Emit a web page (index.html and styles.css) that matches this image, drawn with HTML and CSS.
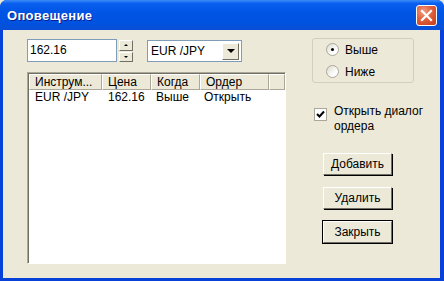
FILE: index.html
```html
<!DOCTYPE html>
<html lang="ru">
<head>
  <meta charset="UTF-8">
  <title>Оповещение</title>
  <link rel="stylesheet" href="styles.css">
</head>
<body>
  <div class="window">
    <div class="titlebar">
      <span class="title">Оповещение</span>
      <span class="close-btn">
        <svg width="13" height="13" viewBox="0 0 13 13"><path d="M2 2 L11 11 M11 2 L2 11" stroke="#fff" stroke-width="2.2" stroke-linecap="square"/></svg>
      </span>
    </div>
    <div class="client">
      <div class="left-col">
        <div class="input-row">
          <div class="edit">162.16</div>
          <div class="spin">
            <span class="spin-btn"><i class="arr-up"></i></span>
            <span class="spin-btn"><i class="arr-down"></i></span>
          </div>
          <div class="combo">
            <span class="combo-text">EUR /JPY</span>
            <span class="combo-btn"><i class="arr-down big"></i></span>
          </div>
        </div>
        <div class="listview">
          <div class="lv-header">
            <span class="hd c1">Инструм...</span>
            <span class="hd c2">Цена</span>
            <span class="hd c3">Когда</span>
            <span class="hd c4">Ордер</span>
            <span class="hd c5"></span>
          </div>
          <div class="lv-row">
            <span class="cell c1">EUR /JPY</span>
            <span class="cell c2">162.16</span>
            <span class="cell c3">Выше</span>
            <span class="cell c4">Открыть</span>
          </div>
        </div>
      </div>
      <div class="right-col">
        <div class="groupbox">
          <label class="radio-line"><span class="radio checked"></span>Выше</label>
          <label class="radio-line"><span class="radio"></span>Ниже</label>
        </div>
        <div class="check-line">
          <span class="checkbox">
            <svg width="9" height="9" viewBox="0 0 9 9"><path d="M1 4 L3.5 6.5 L8 1.5" stroke="#000" stroke-width="2" fill="none"/></svg>
          </span>
          <span class="check-text">Открыть диалог<br>ордера</span>
        </div>
        <div class="buttons">
          <div class="btn">Добавить</div>
          <div class="btn">Удалить</div>
          <div class="btn default">Закрыть</div>
        </div>
      </div>
    </div>
  </div>
</body>
</html>
```

FILE: styles.css
```css
body {
  margin: 0;
  padding: 0;
  font-family: "Liberation Sans", Arial, sans-serif;
  font-size: 12px;
  background: #ece9d8;
}

.window {
  width: 444px;
  height: 281px;
  background: #0841d8;
  border-radius: 7px 7px 0 0;
  display: flex;
  flex-direction: column;
  overflow: hidden;
}

.titlebar {
  height: 30px;
  flex: none;
  display: flex;
  align-items: center;
  justify-content: space-between;
  padding: 0 7px 0 7px;
  background: linear-gradient(to bottom, #3a8cf6 0%, #0a5ef0 12%, #0055e5 40%, #0052e0 75%, #0a4fd6 100%);
}

.title {
  color: #fff;
  font-weight: bold;
  font-size: 13px;
  letter-spacing: 0.3px;
  text-shadow: 1px 1px 0 #0a1e8c;
  margin-top: 1px;
}

.close-btn {
  width: 19px;
  height: 19px;
  border: 1px solid #fff;
  border-radius: 3px;
  background: radial-gradient(circle at 35% 30%, #f0a088 0%, #e0603c 45%, #c63a18 100%);
  display: flex;
  align-items: center;
  justify-content: center;
  margin-top: 1px;
}

.client {
  flex: 1;
  margin: 0 4px 3px 3px;
  background: #ece9d8;
  display: flex;
  padding: 9px 0 0 24px;
}

.left-col {
  width: 259px;
  display: flex;
  flex-direction: column;
}

.input-row {
  display: flex;
  height: 23px;
}

.edit {
  height: 21px;
  border: 1px solid #7f9db9;
  background: #fff;
  padding-left: 2px;
  line-height: 20px;
  width: 86px;
}

.spin {
  margin-left: 2px;
  width: 14px;
  display: flex;
  flex-direction: column;
  gap: 1px;
  padding-top: 1px;
}

.spin-btn {
  height: 9px;
  background: #ece9d8;
  border: 1px solid;
  border-color: #fff #716f64 #716f64 #fff;
  display: flex;
  align-items: center;
  justify-content: center;
}

.arr-up, .arr-down {
  width: 0;
  height: 0;
  border-left: 2px solid transparent;
  border-right: 2px solid transparent;
}

.arr-up { border-bottom: 2px solid #000; }
.arr-down { border-top: 2px solid #000; }
.arr-down.big {
  border-left-width: 4px;
  border-right-width: 4px;
  border-top-width: 4px;
}

.combo {
  margin-left: 14px;
  width: 93px;
  height: 20px;
  margin-top: 1px;
  border: 1px solid #7f9db9;
  background: #fff;
  display: flex;
  align-items: center;
  justify-content: space-between;
}

.combo-text {
  padding-left: 3px;
}

.combo-btn {
  width: 15px;
  height: 15px;
  margin-right: 2px;
  background: #ece9d8;
  border: 1px solid;
  border-color: #fff #716f64 #716f64 #fff;
  display: flex;
  align-items: center;
  justify-content: center;
}

.listview {
  margin-top: 10px;
  height: 189px;
  background: #fff;
  border: 1px solid;
  border-color: #aca899 #fff #fff #aca899;
  box-shadow: inset 1px 1px 0 #716f64;
  padding: 1px 0 0 1px;
}

.lv-header {
  display: flex;
  height: 16px;
}

.hd {
  height: 14px;
  line-height: 14px;
  background: #ece9d8;
  border: 1px solid;
  border-color: #fff #aca899 #aca899 #fff;
  padding-left: 5px;
  white-space: nowrap;
  overflow: hidden;
}

.lv-row {
  display: flex;
  height: 15px;
  line-height: 14px;
}

.cell {
  padding-left: 6px;
  white-space: nowrap;
}

.c1 { width: 66px; }
.c2 { width: 42px; }
.c3 { width: 42px; }
.c4 { width: 62px; }
.c5 { flex: 1; }

.lv-row .c1 { width: 67px; }

.right-col {
  margin-left: 28px;
  display: flex;
  flex-direction: column;
}

.groupbox {
  width: 102px;
  height: 45px;
  border: 1px solid #d0d0bf;
  border-radius: 3px;
  display: flex;
  flex-direction: column;
  justify-content: center;
  gap: 9px;
  padding-left: 13px;
  box-sizing: border-box;
  margin-top: -1px;
  margin-left: -2px;
}

.radio-line {
  display: flex;
  align-items: center;
  height: 13px;
}

.radio {
  width: 11px;
  height: 11px;
  border-radius: 50%;
  border: 1px solid #aca899;
  background: linear-gradient(135deg, #dcdad0 0%, #fff 70%);
  margin-right: 6px;
  position: relative;
}

.radio.checked::after {
  content: "";
  position: absolute;
  left: 4px;
  top: 4px;
  width: 3px;
  height: 3px;
  background: #000;
  border-radius: 50%;
}

.check-line {
  display: flex;
  margin-top: 21px;
  margin-left: 0;
}

.checkbox {
  width: 11px;
  height: 11px;
  margin-top: 4px;
  border: 1px solid #aca899;
  background: #fff;
  display: flex;
  align-items: center;
  justify-content: center;
  flex: none;
}

.check-text {
  margin-left: 7px;
  line-height: 15px;
}

.buttons {
  display: flex;
  flex-direction: column;
  gap: 12px;
  margin-top: 19px;
  margin-left: 9px;
}

.btn {
  width: 67px;
  height: 20px;
  line-height: 20px;
  text-align: center;
  background: #ece9d8;
  border: 1px solid;
  border-color: #fff #716f64 #716f64 #fff;
  box-shadow: 1px 1px 0 #000;
}

.btn.default {
  outline: 1px solid #000;
}
```
